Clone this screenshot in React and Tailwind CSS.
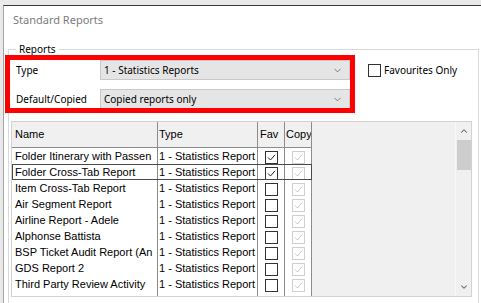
import { ChevronDown, ChevronUp } from "lucide-react";

const reports = [
  { name: "Folder Itinerary with Passen", fav: true },
  { name: "Folder Cross-Tab Report", fav: true, focus: true },
  { name: "Item Cross-Tab Report", fav: false },
  { name: "Air Segment Report", fav: false },
  { name: "Airline Report - Adele", fav: false },
  { name: "Alphonse Battista", fav: false },
  { name: "BSP Ticket Audit Report (An", fav: false },
  { name: "GDS Report 2", fav: false },
  { name: "Third Party Review Activity", fav: false },
];

function Check({ checked, disabled }) {
  return (
    <div
      className={`mt-[3px] w-[13px] h-[13px] border bg-white ${
        disabled ? "border-[#cfcfcf]" : "border-[#333333]"
      }`}
    >
      {checked && (
        <svg viewBox="0 0 11 11" className="w-[11px] h-[11px]">
          <path
            d="M2 5.5 L4.5 8 L9 2.8"
            fill="none"
            stroke={disabled ? "#c6c6c6" : "#222"}
            strokeWidth="1"
          />
        </svg>
      )}
    </div>
  );
}

function Select({ value }) {
  return (
    <div className="w-[250px] h-[20px] bg-[#e5e5e5] border border-[#c9c9c9] flex items-center justify-between pl-[3px] pr-[6px]">
      <span>{value}</span>
      <ChevronDown size={11} strokeWidth={1.4} color="#444" />
    </div>
  );
}

export default function App() {
  return (
    <div className="w-[481px] h-[303px] overflow-hidden bg-[#e9e9e9] pt-[5px] pl-[3px] font-['Noto_Sans',sans-serif] text-[10px] text-black">
      <div className="h-full bg-white border-t border-l border-t-[#3a3a3a] border-l-[#a5a5a5]">
        {/* Titulo */}
        <div className="pl-[9px] pt-[6px] h-[28px] text-[11px] text-[#7b7b7b]">Standard Reports</div>

        {/* Grupo Reports */}
        <fieldset className="ml-[4px] mt-[8px] w-[471px] border border-[#d9d9d9] pb-[20px]">
          <legend className="ml-[7px] px-[3px] leading-[14px]">Reports</legend>

          <div className="relative">
            {/* Filtros */}
            <div className="flex items-center h-[20px] mt-[4px]">
              <span className="w-[91px] pl-[7px]">Type</span>
              <Select value="1 - Statistics Reports" />
              <div className="ml-[18px] mt-[1px] w-[13px] h-[13px] border border-[#333] bg-white" />
              <span className="ml-[3px]">Favourites Only</span>
            </div>
            <div className="flex items-center h-[20px] mt-[9px]">
              <span className="w-[91px] pl-[7px]">Default/Copied</span>
              <Select value="Copied reports only" />
            </div>

            {/* Marco rojo */}
            <div className="absolute left-[-4px] top-[-5px] w-[350px] h-[58px] border-[5px] border-[#ff0000] pointer-events-none" />
          </div>

          {/* Tabla */}
          <div className="ml-[2px] mt-[12px] w-[461px] h-[176px] border border-[#d2d2d2] flex font-['Liberation_Sans',Arial,sans-serif] text-[11px]">
            <div className="w-[443px] bg-[#f0f0f0] flex flex-col">
              <div className="flex h-[26px]">
                <div className="w-[146px] border-r border-b border-[#8c8c8c] pl-[3px] flex items-center">Name</div>
                <div className="w-[100px] border-r border-b border-[#8c8c8c] pl-[1px] flex items-center">Type</div>
                <div className="w-[27px] border-r border-b border-[#8c8c8c] pl-[2px] flex items-center">Fav</div>
                <div className="w-[27px] border-r border-b border-[#8c8c8c] pl-[1px] flex items-center overflow-hidden whitespace-nowrap">Copy</div>
              </div>
              <div className="w-[300px] flex-1 flex flex-col bg-white">
                {reports.map((r) => (
                  <div
                    key={r.name}
                    className={`flex h-[16px] ${r.focus ? "outline outline-1 -outline-offset-1 outline-[#4a4a4a]" : ""}`}
                  >
                    <div className="w-[146px] border-r border-[#8c8c8c] pl-[3px] leading-[16px] whitespace-nowrap overflow-hidden">{r.name}</div>
                    <div className="w-[100px] border-r border-[#8c8c8c] pl-[1px] leading-[16px] whitespace-nowrap overflow-hidden">1 - Statistics Report</div>
                    <div className="w-[27px] border-r border-[#8c8c8c] flex justify-center">
                      <Check checked={r.fav} />
                    </div>
                    <div className="w-[27px] border-r border-[#8c8c8c] flex justify-center">
                      <Check checked disabled />
                    </div>
                  </div>
                ))}
                <div className="flex flex-1">
                  <div className="w-[146px] border-r border-[#8c8c8c]" />
                  <div className="w-[100px] border-r border-[#8c8c8c]" />
                  <div className="w-[27px] border-r border-[#8c8c8c]" />
                  <div className="w-[27px] border-r border-[#8c8c8c]" />
                </div>
              </div>
            </div>

            {/* Barra de desplazamiento */}
            <div className="w-[16px] bg-[#f0f0f0] border-l border-[#f8f8f8] flex flex-col items-center">
              <div className="h-[18px] flex items-center">
                <ChevronUp size={10} strokeWidth={2.5} color="#606060" />
              </div>
              <div className="w-[14px] h-[30px] bg-[#cdcdcd]" />
              <div className="flex-1" />
              <div className="h-[18px] flex items-center">
                <ChevronDown size={10} strokeWidth={2.5} color="#606060" />
              </div>
            </div>
          </div>
        </fieldset>
      </div>
    </div>
  );
}
